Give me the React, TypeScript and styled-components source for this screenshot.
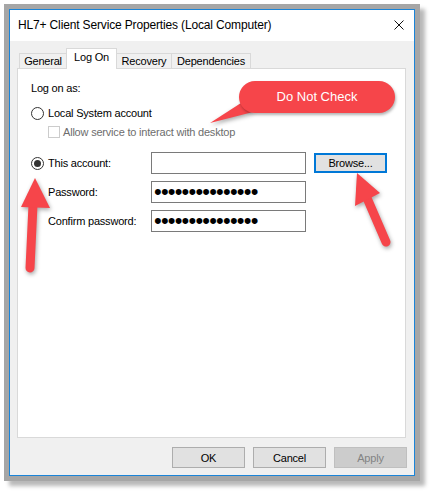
import React from "react";
import styled, { createGlobalStyle } from "styled-components";

const GlobalStyle = createGlobalStyle`
  html, body { margin: 0; padding: 0; background: #ffffff; }
  body { font-family: "Liberation Sans", Arial, sans-serif; }
`;

const Page = styled.div`
  position: relative;
  width: 431px;
  height: 493px;
  box-sizing: border-box;
  padding: 9px 0 0 9px;
  overflow: hidden;
`;

const Window = styled.div`
  width: 406px;
  height: 467px;
  box-sizing: border-box;
  border: 1px solid #1a84d8;
  background: #f0f0f0;
  box-shadow: 0 0 0 5px #a6a6a6, 5px 5px 4px 5px rgba(0, 0, 0, 0.28);
  display: flex;
  flex-direction: column;
  font-size: 11px;
  letter-spacing: -0.2px;
  color: #000;
`;

const TitleBar = styled.div`
  height: 30px;
  background: #ffffff;
  display: flex;
  align-items: center;
  justify-content: space-between;
  padding: 0 10px 1px 8px;
`;

const Title = styled.span`
  font-size: 12px;
  letter-spacing: -0.15px;
`;

const CloseIcon = styled.svg`
  width: 10px;
  height: 10px;
  margin-bottom: 1px;
`;

const Body = styled.div`
  flex: 1;
  display: flex;
  flex-direction: column;
  padding: 8px 8px 7px 7px;
`;

const TabStrip = styled.div`
  display: flex;
  align-items: flex-end;
  height: 19px;
  padding-left: 2px;
`;

const Tab = styled.div<{ $w: number; $active?: boolean }>`
  position: relative;
  box-sizing: border-box;
  width: ${(p) => p.$w}px;
  height: ${(p) => (p.$active ? 21 : 15)}px;
  margin-bottom: ${(p) => (p.$active ? -1 : 0)}px;
  margin-left: -1px;
  border: 1px solid #d9d9d9;
  border-bottom: none;
  background: ${(p) => (p.$active ? "#ffffff" : "#f0f0f0")};
  z-index: ${(p) => (p.$active ? 2 : 1)};
  display: flex;
  justify-content: center;
  align-items: ${(p) => (p.$active ? "flex-start" : "center")};
  padding-top: ${(p) => (p.$active ? 2 : 0)}px;
  font-size: 11px;
  &:first-child { margin-left: 0; }
`;

const Panel = styled.div`
  flex: 1;
  position: relative;
  z-index: 1;
  background: #ffffff;
  border: 1px solid #d9d9d9;
  padding: 12px 0 0 13px;
  display: flex;
  flex-direction: column;
`;

const Line = styled.div`
  height: 15px;
  line-height: 15px;
`;

const OptionRow = styled.div<{ $indent?: number; $gap?: number; $top: number }>`
  display: flex;
  align-items: center;
  height: 14px;
  margin-top: ${(p) => p.$top}px;
  padding-left: ${(p) => p.$indent ?? 0}px;
  gap: ${(p) => p.$gap ?? 4}px;
`;

const Radio = styled.span<{ $checked?: boolean }>`
  box-sizing: border-box;
  width: 13px;
  height: 13px;
  border-radius: 50%;
  border: 1px solid #333333;
  background: #ffffff;
  display: flex;
  align-items: center;
  justify-content: center;
  flex: none;
  &::after {
    content: "";
    width: 7px;
    height: 7px;
    border-radius: 50%;
    background: ${(p) => (p.$checked ? "#333333" : "transparent")};
  }
`;

const Checkbox = styled.span`
  box-sizing: border-box;
  width: 12px;
  height: 12px;
  border: 1px solid #cccccc;
  background: #ffffff;
  flex: none;
`;

const Disabled = styled.span`
  color: #6d6d6d;
`;

const AccountGrid = styled.div`
  display: grid;
  grid-template-columns: 112px 155px 73px;
  grid-auto-rows: 22px;
  column-gap: 8px;
  row-gap: 7px;
  margin-top: 13px;
  align-items: center;
`;

const FieldLabel = styled.div<{ $indent?: number }>`
  display: flex;
  align-items: center;
  gap: 4px;
  padding-left: ${(p) => p.$indent ?? 0}px;
  height: 22px;
`;

const Field = styled.div`
  box-sizing: border-box;
  height: 22px;
  border: 1px solid #7a7a7a;
  background: #ffffff;
  display: flex;
  align-items: center;
  padding: 0 0 0 2px;
`;

const Dots = styled.span`
  font-family: "Liberation Sans", Arial, sans-serif;
  font-size: 22px;
  line-height: 20px;
  height: 20px;
  letter-spacing: -0.8px;
  color: #000;
  white-space: nowrap;
`;

const Button = styled.div<{ $focused?: boolean; $disabled?: boolean }>`
  box-sizing: border-box;
  height: ${(p) => (p.$focused ? 20 : 21)}px;
  width: 73px;
  display: flex;
  align-items: center;
  justify-content: center;
  background: ${(p) => (p.$disabled ? "#cccccc" : "#e1e1e1")};
  border: ${(p) =>
    p.$focused ? "2px solid #0078d7" : p.$disabled ? "1px solid #bfbfbf" : "1px solid #adadad"};
  color: ${(p) => (p.$disabled ? "#838383" : "#000")};
  font-size: 11px;
`;

const ButtonRow = styled.div`
  display: flex;
  justify-content: flex-end;
  gap: 8px;
  margin-top: 9px;
  margin-right: -1px;
`;

const Overlay = styled.svg`
  position: absolute;
  left: 0;
  top: 0;
  width: 431px;
  height: 493px;
  pointer-events: none;
  z-index: 5;
  filter: drop-shadow(1px 2px 2px rgba(0, 0, 0, 0.35));
`;

const Callout = styled.div`
  position: absolute;
  left: 239px;
  top: 81px;
  width: 156px;
  height: 32px;
  border-radius: 16px;
  background: #f6454a;
  color: #ffffff;
  font-family: "Liberation Sans", Arial, sans-serif;
  font-size: 13px;
  display: flex;
  align-items: center;
  justify-content: center;
  z-index: 6;
  box-shadow: 1px 2px 3px rgba(0, 0, 0, 0.3);
  padding-bottom: 1px;
  box-sizing: border-box;
`;

const RED = "#f6454a";
const DOTS = "•".repeat(15);

export default function App() {
  return (
    <>
      <GlobalStyle />
      <Page>
        <Window>
          <TitleBar>
            <Title>HL7+ Client Service Properties (Local Computer)</Title>
            <CloseIcon viewBox="0 0 10 10">
              <path d="M0.5 0.5 L9.5 9.5 M9.5 0.5 L0.5 9.5" stroke="#111" strokeWidth="1" />
            </CloseIcon>
          </TitleBar>
          <Body>
            <TabStrip>
              <Tab $w={48}>General</Tab>
              <Tab $w={51} $active>Log On</Tab>
              <Tab $w={56}>Recovery</Tab>
              <Tab $w={80}>Dependencies</Tab>
            </TabStrip>
            <Panel>
              <Line>Log on as:</Line>
              <OptionRow $top={10}>
                <Radio />
                <span>Local System account</span>
              </OptionRow>
              <OptionRow $top={5} $indent={17} $gap={3}>
                <Checkbox />
                <Disabled>Allow service to interact with desktop</Disabled>
              </OptionRow>
              <AccountGrid>
                <FieldLabel>
                  <Radio $checked />
                  <span>This account:</span>
                </FieldLabel>
                <Field />
                <Button $focused>Browse...</Button>
                <FieldLabel $indent={17}>Password:</FieldLabel>
                <Field>
                  <Dots>{DOTS}</Dots>
                </Field>
                <span />
                <FieldLabel $indent={17}>Confirm password:</FieldLabel>
                <Field>
                  <Dots>{DOTS}</Dots>
                </Field>
                <span />
              </AccountGrid>
            </Panel>
            <ButtonRow>
              <Button>OK</Button>
              <Button>Cancel</Button>
              <Button $disabled>Apply</Button>
            </ButtonRow>
          </Body>
        </Window>
        <Overlay viewBox="0 0 431 493">
          <polygon points="210,123 241,103 253,112" fill={RED} />
          <line x1="33" y1="205" x2="30" y2="268" stroke={RED} strokeWidth="9" strokeLinecap="round" />
          <polygon points="35,178 21,207 50,208" fill={RED} />
          <line x1="367" y1="198" x2="386" y2="242" stroke={RED} strokeWidth="9" strokeLinecap="round" />
          <polygon points="357,173 355,206 380,193" fill={RED} />
        </Overlay>
        <Callout>Do Not Check</Callout>
      </Page>
    </>
  );
}
